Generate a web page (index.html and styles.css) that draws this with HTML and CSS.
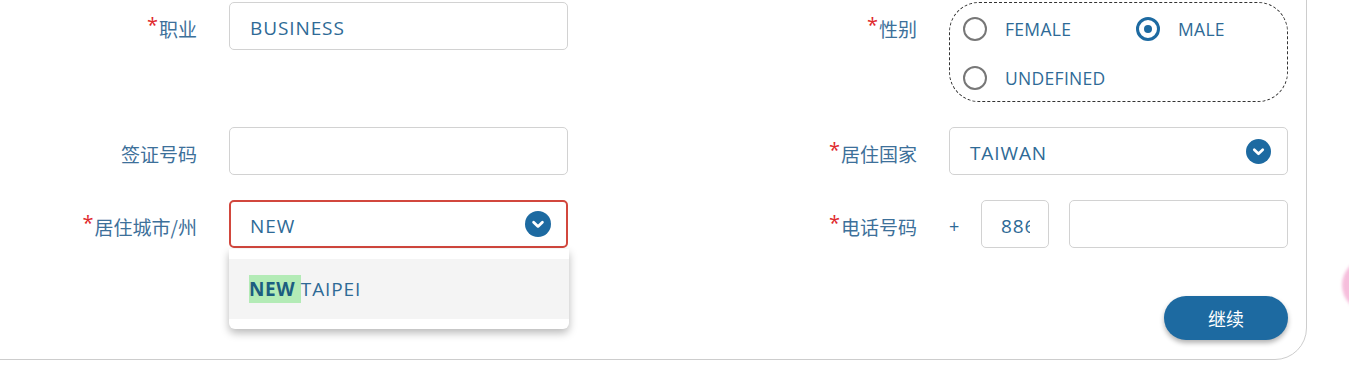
FILE: index.html
```html
<!DOCTYPE html>
<html lang="zh">
<head>
<meta charset="utf-8">
<title>Form</title>
<link rel="stylesheet" href="styles.css">
</head>
<body>
<div class="card">
  <div class="grid">
    <div class="field">
      <div class="label"><span class="req">*</span>职业</div>
      <div class="input">BUSINESS</div>
    </div>
    <div class="field">
      <div class="label"><span class="req">*</span>性别</div>
      <div class="radios">
        <div class="radio"><span class="dot"></span>FEMALE</div>
        <div class="radio"><span class="dot on"></span>MALE</div>
        <div class="radio"><span class="dot"></span>UNDEFINED</div>
      </div>
    </div>
    <div class="field">
      <div class="label">签证号码</div>
      <div class="input"></div>
    </div>
    <div class="field">
      <div class="label"><span class="req">*</span>居住国家</div>
      <div class="input select">TAIWAN
        <svg class="chev" viewBox="0 0 26 26" width="25" height="25"><circle cx="13" cy="13" r="13" fill="#1d6aa1"/><path d="M8.6 11.2 L13 15.4 L17.4 11.2" fill="none" stroke="#fff" stroke-width="2.8" stroke-linecap="round" stroke-linejoin="round"/></svg>
      </div>
    </div>
    <div class="field">
      <div class="label"><span class="req">*</span>居住城市/州</div>
      <div class="combo">
        <div class="input select error">NEW
          <svg class="chev" viewBox="0 0 26 26" width="26" height="26"><circle cx="13" cy="13" r="13" fill="#1d6aa1"/><path d="M8.6 11.2 L13 15.4 L17.4 11.2" fill="none" stroke="#fff" stroke-width="2.8" stroke-linecap="round" stroke-linejoin="round"/></svg>
        </div>
        <div class="menu">
          <div class="option"><mark>NEW </mark>TAIPEI</div>
        </div>
      </div>
    </div>
    <div class="field">
      <div class="label"><span class="req">*</span>电话号码</div>
      <div class="phone">
        <span class="plus">+</span>
        <div class="input code"><span class="clip">886</span></div>
        <div class="input num"></div>
      </div>
    </div>
  </div>
  <div class="actions">
    <button class="btn">继续</button>
  </div>
</div>
<div class="bubble"></div>
</body>
</html>
```

FILE: styles.css
```css
html, body {
  margin: 0;
  padding: 0;
  background: #ffffff;
  overflow: hidden;
}
body {
  font-family: "Open Sans", "Noto Sans CJK SC", sans-serif;
  color: #2e6a96;
}
.card {
  box-sizing: border-box;
  width: 1347px;
  margin: -41px 0 0 -40px;
  padding: 42px 18px 19px 59px;
  border: 1px solid #cdcdcd;
  border-radius: 32px;
  background: #fff;
}
.grid {
  display: grid;
  grid-template-columns: 548px 548px;
  column-gap: 172px;
  row-gap: 25px;
}
.field {
  display: flex;
  align-items: flex-start;
  gap: 32px;
}
.label {
  width: 177px;
  flex: none;
  text-align: right;
  line-height: 53px;
  height: 48px;
  font-family: "Noto Sans CJK SC", sans-serif;
  font-size: 19px;
  color: #3d709a;
  box-sizing: border-box;
}
.req {
  color: #e0282c;
  font-family: "Open Sans", sans-serif;
  font-size: 20px;
  position: relative;
  top: -5px;
  margin-right: 1px;
}
.input {
  box-sizing: border-box;
  width: 339px;
  height: 48px;
  border: 1px solid #d2d2d2;
  border-radius: 5px;
  padding: 4px 20px 0;
  display: flex;
  align-items: center;
  font-size: 19px;
  letter-spacing: 0.9px;
  color: #2e6a96;
  background: #fff;
}
.select {
  justify-content: space-between;
  padding-right: 16px;
}
.error {
  border: 2px solid #d2473d;
  padding-left: 19px;
  padding-right: 15px;
}
.chev { flex: none; margin-top: -4px; }
.combo {
  position: relative;
  width: 340px;
}
.menu {
  position: absolute;
  left: 0;
  top: 49px;
  width: 340px;
  box-sizing: border-box;
  padding: 10px 0;
  background: #fff;
  border-radius: 0 0 6px 6px;
  box-shadow: 0 4px 8px rgba(0,0,0,0.28);
  z-index: 2;
}
.option {
  height: 60px;
  background: #f4f4f4;
  display: flex;
  align-items: center;
  padding-left: 20px;
  font-size: 19px;
  letter-spacing: 0.9px;
  color: #2e6a96;
}
.option mark {
  background: #b3ebb6;
  color: #1c5d80;
  font-weight: 700;
  letter-spacing: 0.6px;
  white-space: pre;
  padding: 1px 0;
}
.radios {
  box-sizing: border-box;
  width: 339px;
  height: 100px;
  border: 1px dashed #333;
  border-radius: 30px;
  padding: 13px 0 0 13px;
  display: grid;
  grid-template-columns: 173px 150px;
  grid-auto-rows: 26px;
  row-gap: 23px;
}
.radio {
  display: flex;
  align-items: center;
  gap: 18px;
  font-size: 17.5px;
  letter-spacing: 0.3px;
  color: #2e6a96;
}
.dot {
  box-sizing: border-box;
  width: 24px;
  height: 24px;
  border: 2px solid #777;
  border-radius: 50%;
  flex: none;
  display: flex;
  align-items: center;
  justify-content: center;
}
.dot.on {
  border: 3px solid #1d6aa1;
}
.dot.on::after {
  content: "";
  width: 8px;
  height: 8px;
  border-radius: 50%;
  background: #1d6aa1;
}
.phone {
  display: flex;
  align-items: center;
  width: 339px;
  height: 48px;
}
.plus {
  width: 10px;
  font-size: 18px;
  text-align: center;
  margin-right: 22px;
  line-height: 48px;
  padding-top: 2px;
  box-sizing: border-box;
  height: 48px;
}
.code {
  width: 68px;
  padding: 4px 3px 0 19px;
  overflow: hidden;
  margin-right: 20px;
}
.clip {
  display: block;
  width: 29px;
  overflow: hidden;
  white-space: nowrap;
}
.num {
  width: 219px;
}
.actions {
  display: flex;
  justify-content: flex-end;
  margin-top: 48px;
}
.btn {
  width: 124px;
  height: 44px;
  border: none;
  border-radius: 22px;
  background: #1d6aa1;
  color: #fff;
  font-family: "Noto Sans CJK SC", sans-serif;
  font-size: 18px;
  box-shadow: 0 3px 5px rgba(0,0,0,0.3);
}
.bubble {
  position: fixed;
  left: 1342px;
  top: 258px;
  width: 54px;
  height: 54px;
  border-radius: 50%;
  background: #f6bedc;
  filter: blur(1.5px);
}
```
